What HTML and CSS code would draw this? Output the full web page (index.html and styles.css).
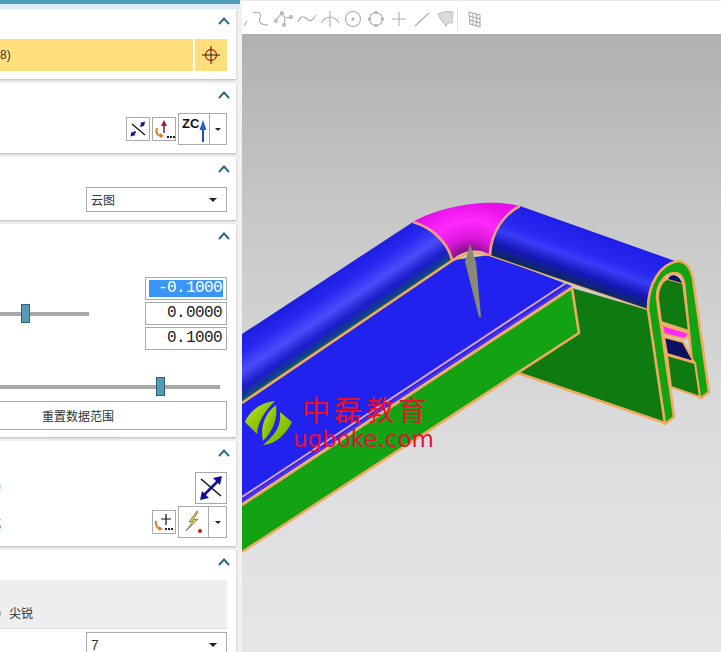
FILE: index.html
```html
<!DOCTYPE html>
<html lang="zh">
<head>
<meta charset="utf-8">
<title>Shape analysis</title>
<link rel="stylesheet" href="styles.css">
</head>
<body>
<aside class="panel">
  <div class="titlebar"></div>
  <div class="cards">
    <section class="card">
      <div class="head"><svg class="chev" viewBox="0 0 12 8"><path d="M1 7 6 1.500 11 7"/></svg></div>
      <div class="row">
        <div class="picked">8)</div>
        <button class="pick-btn"><svg viewBox="0 0 20 20" width="20" height="20"><circle cx="10" cy="10" r="5.500" fill="none" stroke="#c8261a" stroke-width="1.300"/><path d="M10 1v18M1 10h18" stroke="#221" stroke-width="1"/></svg></button>
      </div>
    </section>

    <section class="card">
      <div class="head"><svg class="chev" viewBox="0 0 12 8"><path d="M1 7 6 1.500 11 7"/></svg></div>
      <div class="row end">
        <button class="icon-btn"><svg viewBox="0 0 22 22" width="22" height="22"><path d="M5 6 18 17" stroke="#111" stroke-width="1.200"/><path d="M5 17 8.500 13.500M13.500 8.500 16 6" stroke="#14149a" stroke-width="2"/><path d="M18 3.500l-1 5-4-3.500zM3.500 18.500l1-5 4 3.500z" fill="#14149a"/></svg></button>
        <button class="icon-btn"><svg viewBox="0 0 22 22" width="22" height="22"><path d="M11 15V6" stroke="#7a1c2c" stroke-width="1.500"/><path d="M11 2l3 6H8z" fill="#a01c30"/><path d="M4 10c-2 5 1 8 5 8" fill="none" stroke="#d98030" stroke-width="2"/><path d="M7 15l4 3-4 2z" fill="#d98030"/><path d="M14 18h2v2h-2zM17 18h2v2h-2zM20 18h2v2h-2z" fill="#222"/></svg></button>
        <div class="split">
          <div class="split-main"><span class="zc">ZC</span><svg class="zc-arrow" viewBox="0 0 8 22" width="8" height="22"><path d="M4 8V22" stroke="#1c4fb0" stroke-width="2"/><path d="M4 0 7.500 10h-7z" fill="#2460c8"/></svg></div>
          <div class="split-drop"><i class="caret small"></i></div>
        </div>
      </div>
    </section>

    <section class="card">
      <div class="head"><svg class="chev" viewBox="0 0 12 8"><path d="M1 7 6 1.500 11 7"/></svg></div>
      <div class="row end">
        <div class="select"><span>云图</span><i class="caret"></i></div>
      </div>
    </section>

    <section class="card card-range">
      <div class="head"><svg class="chev" viewBox="0 0 12 8"><path d="M1 7 6 1.500 11 7"/></svg></div>
      <div class="range-row">
        <div class="slider short"><div class="thumb thumb-mid"></div></div>
        <div class="fields">
          <div class="field"><span class="selected">-0. 10000</span></div>
          <div class="field"><span class="value">0. 00000</span></div>
          <div class="field"><span class="value">0. 10000</span></div>
        </div>
      </div>
      <div class="slider long"><div class="thumb thumb-long"></div></div>
      <button class="reset">重置数据范围</button>
    </section>

    <section class="card">
      <div class="head"><svg class="chev" viewBox="0 0 12 8"><path d="M1 7 6 1.500 11 7"/></svg></div>
      <div class="row end first-tool">
        <span class="cyan-mark"></span>
        <button class="icon-btn big"><svg viewBox="0 0 30 30" width="30" height="30"><path d="M5 6 25 23" stroke="#111" stroke-width="1.500"/><path d="M7 23 23 7" stroke="#10109a" stroke-width="2.600"/><path d="M26 3l-2 9-7-7zM4 27l2-9 7 7z" fill="#10109a"/></svg></button>
      </div>
      <div class="row end tools">
        <span class="clip-label">式</span>
        <button class="icon-btn"><svg viewBox="0 0 22 22" width="22" height="22"><path d="M13 3v11M8 8h10" stroke="#111" stroke-width="1.200"/><path d="M3 10c-1 5 2 8 5 8" fill="none" stroke="#d98030" stroke-width="2"/><path d="M6 15l4 3-4 2z" fill="#d98030"/><path d="M12 17h2v2h-2zM15 17h2v2h-2zM18 17h2v2h-2z" fill="#222"/></svg></button>
        <div class="split">
          <div class="split-main center"><svg viewBox="0 0 24 28" width="24" height="28"><path d="M15 3 7 14l4-1-7 10 12-12-5 1 5-8z" fill="#e6d84a" stroke="#6c6c50" stroke-width=".8"/><circle cx="18" cy="23" r="2" fill="#c02020"/></svg></div>
          <div class="split-drop"><i class="caret small"></i></div>
        </div>
      </div>
    </section>

    <section class="card">
      <div class="head"><svg class="chev" viewBox="0 0 12 8"><path d="M1 7 6 1.500 11 7"/></svg></div>
      <div class="group">
        <span class="radio"></span><span class="radio-label">尖锐</span>
      </div>
      <div class="row end">
        <div class="select"><span class="num">7</span><i class="caret"></i></div>
      </div>
    </section>
  </div>
</aside>

<main class="main">
  <nav class="toolbar">
    <svg class="stub" viewBox="0 0 9 20" width="9" height="20"><path d="M2 17 5 12"/></svg>
    <svg viewBox="0 0 20 20" width="20" height="20"><path d="M2 4c6-2 9 0 7 5-2 4 1 7 8 7"/></svg>
    <svg viewBox="0 0 20 20" width="20" height="20"><path d="M1 12 8 4l3 5 7-1M11 9l-1 8"/><circle cx="8" cy="4" r="1.400"/><circle cx="2" cy="12" r="1.400"/><circle cx="17" cy="8" r="1.400"/><circle cx="10" cy="16" r="1.400"/></svg>
    <svg viewBox="0 0 20 20" width="20" height="20"><path d="M1 13c3-7 6-6 9-3s5 2 9-4"/></svg>
    <svg viewBox="0 0 20 20" width="20" height="20"><path d="M1 14C4 9 7 8 10 8s6 1 9 6M10 2v16"/></svg>
    <svg viewBox="0 0 20 20" width="20" height="20"><circle cx="10" cy="10" r="7.500"/><circle cx="10" cy="10" r="1" class="dot"/></svg>
    <svg viewBox="0 0 20 20" width="20" height="20"><circle cx="10" cy="10" r="6.500"/><circle cx="10" cy="3.500" r="1" class="dot"/><circle cx="10" cy="16.500" r="1" class="dot"/><circle cx="3.500" cy="10" r="1" class="dot"/><circle cx="16.500" cy="10" r="1" class="dot"/></svg>
    <svg viewBox="0 0 20 20" width="20" height="20"><path d="M10 3v14M3 10h14"/></svg>
    <svg viewBox="0 0 20 20" width="20" height="20"><path d="M3 17 17 4M7 13l-2 2" /></svg>
    <svg viewBox="0 0 20 20" width="20" height="20"><path class="surf" d="M3 5c5-2 10-3 15-2l-1 11c-3-1-5 0-6 3C8 13 5 10 3 5z"/></svg>
    <span class="tool-sep"></span>
    <svg viewBox="0 0 20 20" width="20" height="20"><path d="M5 3l11 3v12l-10-3zM5 7l11 3M5.500 11l10.500 3M9 4v12M12.500 5v12"/></svg>
  </nav>

  <div class="viewport">
    <svg class="scene" viewBox="242 34 479 618" preserveAspectRatio="xMinYMin slice">
      <defs>
        <linearGradient id="tubeL" gradientUnits="userSpaceOnUse" x1="300" y1="296" x2="331" y2="342">
          <stop offset="0" stop-color="#1e1ee0"/>
          <stop offset=".25" stop-color="#2626f0"/>
          <stop offset=".55" stop-color="#4a4cfa"/>
          <stop offset=".8" stop-color="#1c1cc8"/>
          <stop offset=".93" stop-color="#123c90"/>
          <stop offset="1" stop-color="#146a50"/>
        </linearGradient>
        <linearGradient id="tubeR" gradientUnits="userSpaceOnUse" x1="600" y1="235" x2="582" y2="286">
          <stop offset="0" stop-color="#1e1ee6"/>
          <stop offset=".4" stop-color="#2a2af4"/>
          <stop offset=".55" stop-color="#3a3cf8"/>
          <stop offset=".8" stop-color="#1616b4"/>
          <stop offset="1" stop-color="#0c2a60"/>
        </linearGradient>
        <radialGradient id="bend" gradientUnits="userSpaceOnUse" cx="470" cy="268" r="66">
          <stop offset=".22" stop-color="#701070"/>
          <stop offset=".45" stop-color="#d818d8"/>
          <stop offset=".72" stop-color="#ff28ff"/>
          <stop offset="1" stop-color="#e810e8"/>
        </radialGradient>
        <linearGradient id="leaf" x1="0" y1="0" x2="1" y2="1">
          <stop offset="0" stop-color="#c8e838"/>
          <stop offset=".55" stop-color="#8cc400"/>
          <stop offset="1" stop-color="#6aa800"/>
        </linearGradient>
      </defs>

      <!-- dark inner wall -->
      <polygon points="572,288 648,310 665,423 518,373 578,333" class="dark"/>
      <path d="M518,373 665,423" class="edge"/>
      <!-- front face -->
      <polygon points="242,505 572,288 579,333 242,552" class="green"/>
      <path d="M572,288 579,333 242,552" class="edge"/>
      <!-- floor -->
      <polygon points="242,402 453,260 490,255 572,286 242,503" class="floor"/>
      <path d="M242,497 566,283" class="pink"/>
      <path d="M242,501 570,285.500" class="violet"/>
      <path d="M242,505 572,288" class="edge"/>
      <path d="M490,255 648,309" class="edge"/>
      <!-- tubes -->
      <path d="M242,334 413,222C434,228 448,244 452,260L242,402Z" fill="url(#tubeL)"/>
      <path d="M520,206 675,261C662,270 648,285 648,309L490,255C491,232 504,214 520,206Z" fill="url(#tubeR)"/>
      <path d="M413,222C440,206 490,198 520,206 504,214 491,232 490,255 478,247 462,250 452,260 448,244 434,228 413,222Z" fill="url(#bend)"/>
      <path d="M413,222C434,228 448,244 452,260M520,206C504,214 491,232 490,255" class="seam"/>
      <path d="M242,403 453,260 470,252 490,255" class="edge"/>
      <!-- end profile: band of the section -->
      <path d="M648,309C648,284 660,264 678,261 690,262 693,274 694,286L709,392 701,398 695,393 689,333 684,283C682,276 680,273 674,273 664,274 657,285 657,297 658,308 660,320 661,325L665,354 670,388 674,417 665,424Z" class="green edge-fill"/>
      <path d="M658,298C658,286 664,279 668,279L683,283 689,331 661,322Z" class="dark thin"/>
      <path d="M668,279C670,274 678,273 682,283Z" class="navy"/>
      <polygon points="662,325 689,333 685,339 664,334" class="magenta thin"/>
      <polygon points="664,337 683,342 694,362 667,354" class="navy thin"/>
      <polygon points="667,355 695,363 700,397 671,387" class="dark thin"/>
      <!-- pin -->
      <polygon points="470,244 476,262 481,317 479,317 465,262" fill="#8a8a74"/>
      <!-- watermark logo -->
      <path d="M245,422C250,410 262,402 275,401 264,412 258,422 257,434Z" fill="url(#leaf)"/>
      <path d="M276,405C278,420 272,432 263,441 260,428 264,414 276,405Z" fill="url(#leaf)"/>
      <path d="M280,412 292,422C286,434 276,444 263,445 274,436 282,426 280,412Z" fill="url(#leaf)"/>
    </svg>
    <div class="mark-cn">中磊教育</div>
    <div class="mark-en">ugboke.com</div>
  </div>
</main>
</body>
</html>
```
FILE: styles.css
```css
* { box-sizing: border-box; }

html, body {
  margin: 0;
  height: 100%;
}

body {
  display: flex;
  width: 721px;
  height: 652px;
  overflow: hidden;
  background: #f0f0f0;
  font-family: "Noto Sans CJK SC", "Liberation Sans", sans-serif;
  font-size: 12px;
  color: #333;
}

button {
  font: inherit;
  color: inherit;
  background: #fff;
  padding: 0;
}

/* left dialog, scrolled so its left part is off-screen */
.panel {
  flex: 0 0 242px;
  height: 652px;
  overflow: hidden;
  background: #f1f1f1;
}

.titlebar {
  height: 9px;
  background: #dcf0f6;
  border-top: 4px solid #4f9dba;
  margin-right: 2px;
}

.cards {
  display: flex;
  flex-direction: column;
  gap: 4px;
  width: 307px;
  margin-left: -71px;
}

.card {
  background: #fff;
  padding: 0 9px 8px 0;
  box-shadow: 0 1px 2px #b4b4b4;
}

.card-range { padding-bottom: 7px; }

.head {
  display: flex;
  justify-content: flex-end;
  height: 30px;
  padding: 8px 0 0;
}

.chev {
  width: 12px;
  height: 8px;
  margin-right: -3px;
}

.chev path {
  fill: none;
  stroke: #2b6c80;
  stroke-width: 2;
}

.row {
  display: flex;
  align-items: center;
  gap: 2px;
}

.row.end { justify-content: flex-end; }

.picked {
  flex: 1;
  height: 32px;
  line-height: 32px;
  padding-left: 71px;
  background: #ffdf7c;
  font-family: "Liberation Sans", sans-serif;
}

.pick-btn {
  display: flex;
  align-items: center;
  justify-content: center;
  width: 32px;
  height: 32px;
  border: 0;
  background: #ffdf7c;
}

.icon-btn {
  display: flex;
  align-items: center;
  justify-content: center;
  width: 24px;
  height: 24px;
  border: 1px solid #aaa;
}

.icon-btn.big {
  width: 32px;
  height: 32px;
}

.split {
  display: flex;
  width: 49px;
  height: 32px;
  border: 1px solid #aaa;
  background: #fff;
}

.split-main {
  display: flex;
  flex: 1;
  align-items: flex-start;
  justify-content: space-between;
  padding: 0 2px 0 3px;
  border-right: 1px solid #aaa;
}

.split-main.center {
  align-items: center;
  justify-content: center;
}

.zc {
  font: bold 13px/1 "Liberation Sans", sans-serif;
  margin-top: 3px;
  color: #111;
}

.zc-arrow { margin-top: 6px; }

.split-drop {
  display: flex;
  align-items: center;
  justify-content: center;
  width: 17px;
}

.caret {
  display: block;
  width: 0;
  height: 0;
  border-left: 4px solid transparent;
  border-right: 4px solid transparent;
  border-top: 4px solid #222;
}

.caret.small {
  border-left-width: 3px;
  border-right-width: 3px;
  border-top-width: 3px;
}

.select {
  display: flex;
  align-items: center;
  justify-content: space-between;
  width: 141px;
  height: 25px;
  padding: 0 9px 0 4px;
  border: 1px solid #aaa;
  background: #fff;
}

.num {
  font: 14px/1 "Liberation Sans", sans-serif;
}

.range-row {
  display: flex;
  align-items: center;
  justify-content: space-between;
  margin-top: 23px;
}

.slider {
  position: relative;
  height: 4px;
  background: #a9a9a9;
}

.slider.short { width: 160px; }

.slider.long {
  width: 291px;
  margin-top: 35px;
}

.thumb {
  position: absolute;
  top: -8px;
  width: 9px;
  height: 19px;
  background: #549cb6;
  border: 1px solid #2f6272;
}

.thumb-mid { left: 92px; }
.thumb-long { left: 227px; }

.fields {
  display: flex;
  flex-direction: column;
  gap: 2px;
  width: 82px;
}

.field {
  height: 23px;
  padding: 2px 3px;
  border: 1px solid #aaa;
  font: 16px/17px "Liberation Mono", monospace;
  letter-spacing: -.6px;
  word-spacing: -8px;
  color: #222;
}

.selected,
.value {
  display: block;
  width: 74px;
  height: 17px;
  overflow: hidden;
  white-space: nowrap;
}

.selected {
  padding-left: 9px;
  background: #3a96f4;
  color: #fff;
}

.value { padding-left: 18px; }

.reset {
  display: block;
  width: 298px;
  height: 29px;
  margin-top: 12px;
  border: 1px solid #aaa;
  text-align: center;
}

.first-tool {
  position: relative;
  margin: 1px 0 2px;
}

.cyan-mark {
  position: absolute;
  left: 66px;
  top: 11px;
  width: 6px;
  height: 8px;
  border-radius: 50%;
  background: #a8e4ee;
}

.tools { position: relative; }

.clip-label {
  position: absolute;
  left: 60px;
  top: 8px;
}

.group {
  display: flex;
  align-items: center;
  height: 49px;
  padding: 18px 0 0 61px;
  margin-bottom: 3px;
  background: #eeeeee;
  border-bottom: 1px solid #dcdcdc;
}

.radio {
  flex: none;
  width: 11px;
  height: 11px;
  margin-right: 8px;
  border: 1px solid #999;
  border-radius: 50%;
  background: #fff;
}

.radio-label { line-height: 1; }

/* graphics window */
.main {
  display: flex;
  flex: 1;
  flex-direction: column;
  min-width: 0;
}

.toolbar {
  display: flex;
  align-items: center;
  gap: 3px;
  flex: 0 0 34px;
  padding-top: 2px;
  background: #fff;
  border-top: 1px solid #e8e8e8;
}

.toolbar svg { flex: none; }
.toolbar .stub { margin-right: -3px; }

.toolbar path,
.toolbar circle {
  fill: none;
  stroke: #adadad;
  stroke-width: 1.100;
}

.toolbar .dot { fill: #adadad; }

.toolbar .surf {
  fill: #dcdcdc;
  stroke: #c4c4c4;
}

.tool-sep {
  width: 1px;
  height: 24px;
  margin: 0 3px 0 -1px;
  background: #dedede;
}

.viewport {
  position: relative;
  flex: 1;
  overflow: hidden;
  background: linear-gradient(#b0b0b0, #c8c8c8 30%, #dcdcde 65%, #e6e6e8);
}

.scene {
  display: block;
  width: 100%;
  height: 100%;
}

.green { fill: #12a212; }
.dark { fill: #0f7a0f; }
.floor { fill: #2222ee; }
.navy { fill: #0c1060; }
.magenta { fill: #ff28ff; }

.edge {
  fill: none;
  stroke: #f0aa60;
  stroke-width: 2.600;
  stroke-linejoin: round;
}

.edge-fill {
  stroke: #f0aa60;
  stroke-width: 2.600;
  stroke-linejoin: round;
}

.seam {
  fill: none;
  stroke: #f0a080;
  stroke-width: 2.600;
}

.thin {
  stroke: #f0aa60;
  stroke-width: 2;
  stroke-linejoin: round;
}

.pink {
  stroke: #d8a0c8;
  stroke-width: 2;
}

.violet {
  stroke: #5a34e0;
  stroke-width: 2;
}

.mark-cn {
  position: absolute;
  left: 60px;
  top: 358px;
  font: 28px/34px "Noto Sans CJK SC", sans-serif;
  letter-spacing: 4px;
  color: #e8102c;
  white-space: nowrap;
}

.mark-en {
  position: absolute;
  left: 51px;
  top: 391px;
  font: 23px/28px "DejaVu Sans", sans-serif;
  color: #e4103a;
  white-space: nowrap;
}
```
